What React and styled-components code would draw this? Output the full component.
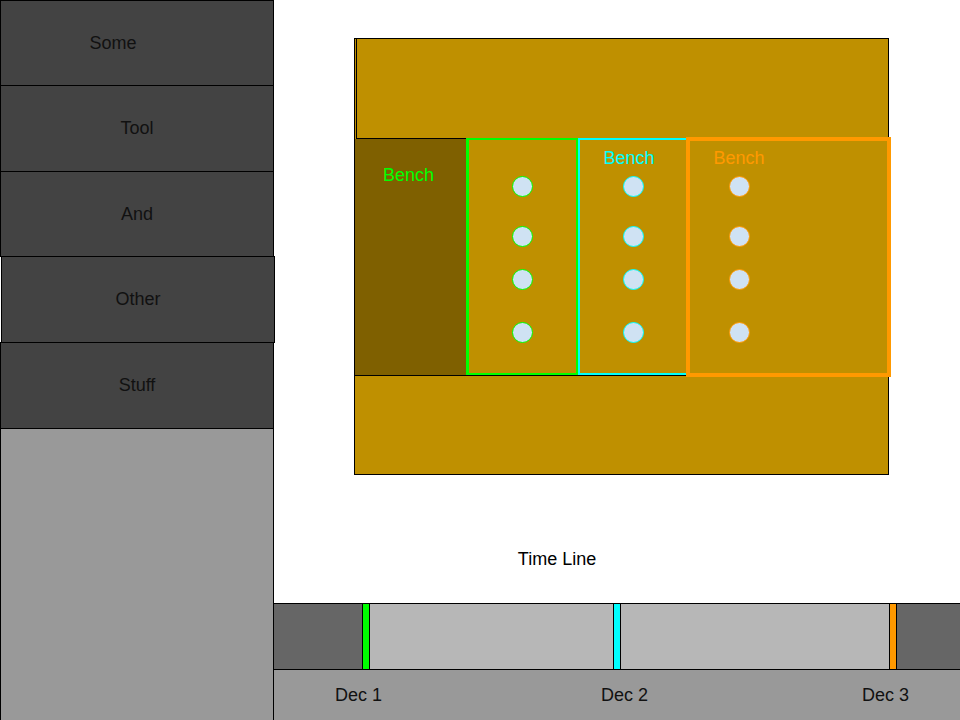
import React from 'react';
import styled, { createGlobalStyle } from 'styled-components';

const GlobalStyle = createGlobalStyle`
  html, body {
    margin: 0;
    padding: 0;
    background: #fff;
    font-family: "Liberation Sans", Arial, sans-serif;
  }
  * { box-sizing: border-box; }
`;

// heights incl. the shared border line, step is ~85.6px in the mockup
const tools = [
  { label: 'Some', shift: 48, h: 86 },
  { label: 'Tool', h: 87 },
  { label: 'And', h: 86 },
  { label: 'Other', nudge: 1, h: 87 },
  { label: 'Stuff', h: 87 },
];

// dot gaps are uneven in the mockup, keep them as data
const dotGaps = [7, 29, 22, 32];

const benches = [
  { color: '#00ff00', showLabel: false, edge: '2px 2px 2px 3px' },
  { color: '#00ffff', showLabel: true, edge: '2px', labelShift: 8 },
  { color: '#ff9900', showLabel: true, edge: '4px', wide: true },
];

const markers = [
  { color: '#00ff00', before: 88 },
  { color: '#00ffff', before: 243 },
  { color: '#ff9900', before: 268 },
];

const dates = [
  { label: 'Dec 1', offset: 61 },
  { label: 'Dec 2', offset: 219 },
  { label: 'Dec 3', offset: 214 },
];

const App = () => {
  return (
    <Page>
      <GlobalStyle />
      <Sidebar>
        {tools.map((t, i) => (
          <ToolButton
            key={t.label}
            $first={i === 0}
            $h={t.h}
            $shift={t.shift || 0}
            $nudge={t.nudge || 0}
          >
            {t.label}
          </ToolButton>
        ))}
        <SidebarFill />
      </Sidebar>

      <Main>
        <Floor>
          <TopZone />
          <BenchRow>
            <Storage>
              <BenchLabel $color="#00ff00" $shift={4}>Bench</BenchLabel>
            </Storage>
            {benches.map(b => (
              <Bench key={b.color} $color={b.color} $edge={b.edge} $wide={b.wide}>
                <BenchColumn $wide={b.wide}>
                  <BenchLabel
                    $color={b.color}
                    $hidden={!b.showLabel}
                    $shift={b.labelShift || 0}
                  >
                    Bench
                  </BenchLabel>
                  {dotGaps.map((g, i) => (
                    <Dot key={i} $color={b.color} $gap={g} />
                  ))}
                </BenchColumn>
              </Bench>
            ))}
          </BenchRow>
          <BottomZone />
        </Floor>

        <Caption>Time Line</Caption>

        <Timeline>
          <Track>
            {markers.map((m, i) => (
              <React.Fragment key={m.color}>
                <Span $dark={i === 0} $w={m.before} />
                <Marker $color={m.color} />
              </React.Fragment>
            ))}
            <Span $dark $grow />
          </Track>
          <Dates>
            {dates.map(d => (
              <DateLabel key={d.label} $offset={d.offset}>{d.label}</DateLabel>
            ))}
          </Dates>
        </Timeline>
      </Main>
    </Page>
  );
};

export default App;

const Page = styled.div`
  display: flex;
  width: 960px;
  height: 720px;
  overflow: hidden;
`;

const Sidebar = styled.div`
  display: flex;
  flex-direction: column;
  width: 274px;
  flex-shrink: 0;
`;

const ToolButton = styled.div`
  flex: none;
  height: ${p => p.$h}px;
  margin-top: ${p => (p.$first ? 0 : -1)}px;
  margin-left: ${p => p.$nudge}px;
  margin-right: ${p => -p.$nudge}px;
  background: #434343;
  border: 1px solid #000;
  display: flex;
  align-items: center;
  justify-content: center;
  padding-right: ${p => p.$shift}px;
  font-size: 18px;
  color: #111;
`;

const SidebarFill = styled.div`
  flex: 1;
  background: #999999;
  border-right: 1px solid #000;
  border-left: 1px solid #000;
`;

const Main = styled.div`
  flex: 1;
  display: flex;
  flex-direction: column;
  padding-top: 38px;
`;

const Floor = styled.div`
  margin-left: 80px;
  width: 535px;
  height: 437px;
  border: 1px solid #000;
  background: #bf9000;
  display: flex;
  flex-direction: column;
`;

const TopZone = styled.div`
  height: 100px;
  margin-left: 1px;
  border: 1px solid #000;
  border-top: none;
  border-right: none;
`;

const BenchRow = styled.div`
  display: flex;
  height: 236px;
`;

const Storage = styled.div`
  width: 111px;
  background: #7f6000;
  display: flex;
  flex-direction: column;
  align-items: center;
  padding-top: 26px;
`;

const Bench = styled.div`
  position: relative;
  width: ${p => (p.$wide ? '205px' : p.$color === '#00ff00' ? '112px' : '110px')};
  margin: ${p => (p.$wide ? '-2px -4px -2px -2px' : '-1px 0 0 0')};
  border-style: solid;
  border-color: ${p => p.$color};
  border-width: ${p => p.$edge};
  display: flex;
`;

const BenchColumn = styled.div`
  width: ${p => (p.$wide ? '98px' : '100%')};
  display: flex;
  flex-direction: column;
  align-items: center;
  padding-top: ${p => (p.$wide ? '7px' : '8px')};
`;

const BenchLabel = styled.div`
  font-size: 18px;
  line-height: 21px;
  color: ${p => p.$color};
  margin-right: ${p => p.$shift}px;
  visibility: ${p => (p.$hidden ? 'hidden' : 'visible')};
`;

const Dot = styled.div`
  width: 21px;
  height: 21px;
  border-radius: 50%;
  background: #cfe2f3;
  border: 1px solid ${p => p.$color};
  margin-top: ${p => p.$gap}px;
`;

const BottomZone = styled.div`
  flex: 1;
  border-top: 1px solid #000;
`;

const Caption = styled.div`
  width: 566px;
  margin-top: 74px;
  text-align: center;
  font-size: 18px;
  line-height: 21px;
  color: #000;
`;

const Timeline = styled.div`
  margin-top: auto;
  display: flex;
  flex-direction: column;
`;

const Track = styled.div`
  display: flex;
  height: 67px;
  border-top: 1px solid #000;
  border-bottom: 1px solid #000;
`;

const Span = styled.div`
  width: ${p => (p.$grow ? 'auto' : `${p.$w}px`)};
  flex: ${p => (p.$grow ? 1 : 'none')};
  background: ${p => (p.$dark ? '#666666' : '#b7b7b7')};
`;

const Marker = styled.div`
  width: 8px;
  background: ${p => p.$color};
  border-left: 1px solid #000;
  border-right: 1px solid #000;
`;

const Dates = styled.div`
  height: 50px;
  background: #999999;
  display: flex;
  align-items: center;
`;

const DateLabel = styled.div`
  margin-left: ${p => p.$offset}px;
  font-size: 18px;
  color: #111;
`;
